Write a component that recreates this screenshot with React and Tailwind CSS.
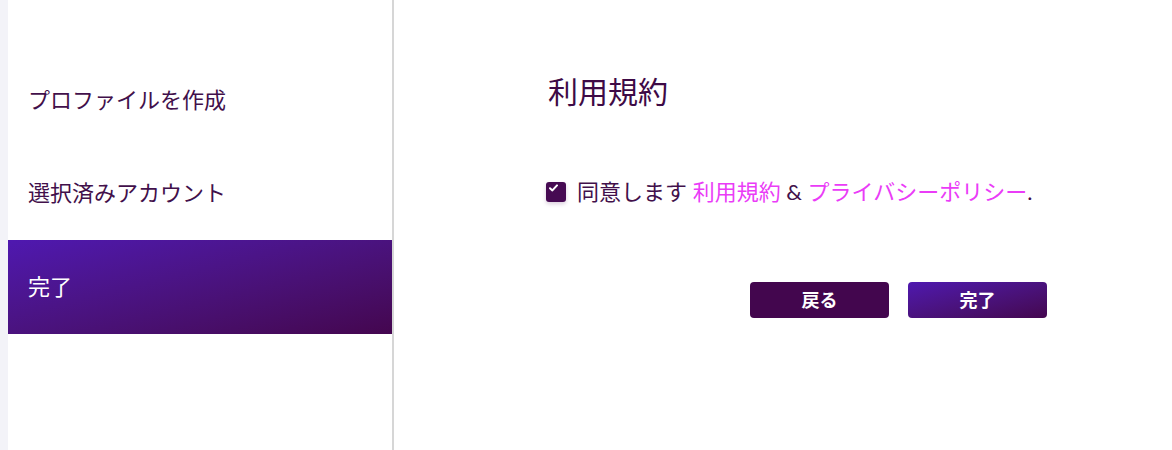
const steps = ["プロファイルを作成", "選択済みアカウント", "完了"];

const App = () => {
  const active = 2;

  return (
    <div
      className="flex h-[450px] w-[1172px] bg-white text-[#42104b]"
      style={{ fontFamily: 'Lato, "Noto Sans CJK JP", sans-serif' }}
    >
      <div className="w-2 bg-[#f3f3f8]" />

      {/* Steps */}
      <aside className="w-[384px] pt-[53px] border-r-2 border-[#d6d6d6] box-content">
        {steps.map((step, i) => (
          <div
            key={step}
            className={`h-[93.5px] flex items-center pl-5 text-[22px] leading-none ${
              i === active
                ? "bg-gradient-to-br from-[#4f18b0] to-[#44064f] text-white"
                : "text-[#42104b]"
            }`}
          >
            {step}
          </div>
        ))}
      </aside>

      {/* Content */}
      <main className="flex-1 pl-[152px] pt-[76px]">
        <div className="w-[501px]">
          <h1 className="text-[30px] leading-[30px] text-[#3e0a46] pl-[2px]">利用規約</h1>

          <label className="mt-[75px] flex items-center gap-[11px] text-[22px] leading-[22px]">
            <span className="w-5 h-5 rounded-[3px] bg-[#460a52] shadow-[0_2px_4px_rgba(70,10,82,0.2)] flex items-start justify-start pl-[3px] pt-[2px]">
              <svg width="9" height="8" viewBox="0 0 9 8" fill="none">
                <path d="M1 4.2 L3.4 6.4 L8 1.4" stroke="white" strokeWidth="2" strokeLinecap="round" strokeLinejoin="round" />
              </svg>
            </span>
            <span>
              同意します <a className="text-[#ea3cf7]">利用規約</a> &amp;{" "}
              <a className="text-[#ea3cf7]">プライバシーポリシー</a>.
            </span>
          </label>

          <div className="mt-[79px] flex justify-end gap-[19px]">
            <button className="w-[139px] h-9 rounded bg-[#43064e] text-white text-[18px] font-bold">
              戻る
            </button>
            <button className="w-[139px] h-9 rounded bg-gradient-to-br from-[#4f18b0] to-[#44064f] text-white text-[18px] font-bold">
              完了
            </button>
          </div>
        </div>
      </main>
    </div>
  );
};

export default App;
